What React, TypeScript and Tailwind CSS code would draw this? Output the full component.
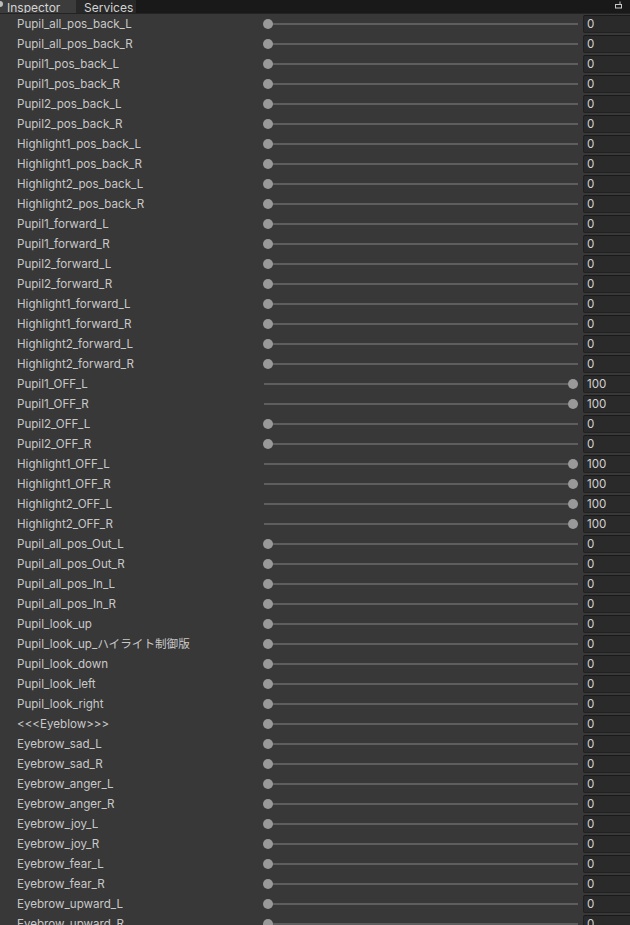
import React from 'react';

type Row = { name: string; value: number };

const names: [string, number][] = [
  ['Pupil_all_pos_back_L', 0],
  ['Pupil_all_pos_back_R', 0],
  ['Pupil1_pos_back_L', 0],
  ['Pupil1_pos_back_R', 0],
  ['Pupil2_pos_back_L', 0],
  ['Pupil2_pos_back_R', 0],
  ['Highlight1_pos_back_L', 0],
  ['Highlight1_pos_back_R', 0],
  ['Highlight2_pos_back_L', 0],
  ['Highlight2_pos_back_R', 0],
  ['Pupil1_forward_L', 0],
  ['Pupil1_forward_R', 0],
  ['Pupil2_forward_L', 0],
  ['Pupil2_forward_R', 0],
  ['Highlight1_forward_L', 0],
  ['Highlight1_forward_R', 0],
  ['Highlight2_forward_L', 0],
  ['Highlight2_forward_R', 0],
  ['Pupil1_OFF_L', 100],
  ['Pupil1_OFF_R', 100],
  ['Pupil2_OFF_L', 0],
  ['Pupil2_OFF_R', 0],
  ['Highlight1_OFF_L', 100],
  ['Highlight1_OFF_R', 100],
  ['Highlight2_OFF_L', 100],
  ['Highlight2_OFF_R', 100],
  ['Pupil_all_pos_Out_L', 0],
  ['Pupil_all_pos_Out_R', 0],
  ['Pupil_all_pos_In_L', 0],
  ['Pupil_all_pos_In_R', 0],
  ['Pupil_look_up', 0],
  ['Pupil_look_up_ハイライト制御版', 0],
  ['Pupil_look_down', 0],
  ['Pupil_look_left', 0],
  ['Pupil_look_right', 0],
  ['<<<Eyeblow>>>', 0],
  ['Eyebrow_sad_L', 0],
  ['Eyebrow_sad_R', 0],
  ['Eyebrow_anger_L', 0],
  ['Eyebrow_anger_R', 0],
  ['Eyebrow_joy_L', 0],
  ['Eyebrow_joy_R', 0],
  ['Eyebrow_fear_L', 0],
  ['Eyebrow_fear_R', 0],
  ['Eyebrow_upward_L', 0],
  ['Eyebrow_upward_R', 0],
];

const rows: Row[] = names.map(([name, value]) => ({ name, value }));

// 0..100 slider, thumb travels 5px..310px inside a 315px track box
const SliderRow: React.FC<{ row: Row }> = ({ row }) => (
  <div className="flex items-center h-[20px] pl-[17px]">
    <div className="w-[246px] shrink-0 truncate text-[11.6px] leading-[20px] text-[#c8c8c8]">{row.name}</div>
    <div className="relative w-[315px] h-[20px] shrink-0 flex items-center">
      <div className="w-full h-[2px] ml-[1px] bg-[#5e5e5e]"></div>
      <div
        className="absolute top-[5px] w-[10px] h-[10px] rounded-full bg-[#999999]"
        style={{ left: `${(row.value / 100) * 305}px` }}
      ></div>
    </div>
    <div className="ml-[5px] w-[60px] h-[18px] shrink-0 bg-[#2a2a2a] border border-[#212121] border-t-[#1a1a1a] rounded-[2px] pl-[3px] text-[11.6px] leading-[16px] text-[#d2d2d2]">
      {row.value}
    </div>
  </div>
);

const App: React.FC = () => {
  return (
    <div
      className="w-[630px] h-[925px] overflow-hidden bg-[#383838]"
      style={{ fontFamily: 'Inter, "Noto Sans CJK JP", sans-serif' }}
    >
      {/* tab bar */}
      <div className="relative flex h-[14px] bg-[#191919] border-b border-[#232323] overflow-hidden text-[12px] text-[#d4d4d4]">
        <div className="w-[76px] bg-[#3c3c3c] flex items-end leading-[12px] pl-[7px]">
          <span className="absolute left-[-3px] top-[1px] w-[6px] h-[6px] rounded-full bg-[#bdbdbd]"></span>
          <span className="-mb-[1px]">Inspector</span>
        </div>
        <div className="w-[60px] bg-[#282828] flex items-end leading-[12px] pl-[8px]">
          <span className="-mb-[1px]">Services</span>
        </div>
        <div className="flex-1"></div>
        <svg className="absolute right-[7px] top-[1px]" width="8" height="8" viewBox="0 0 8 8" fill="none">
          <path d="M5 0.5V3" stroke="#c8c8c8" strokeWidth="1" />
          <rect x="0.5" y="3.5" width="6" height="3.5" stroke="#c8c8c8" strokeWidth="1" />
        </svg>
      </div>
      <div className="flex flex-col">
        {rows.map((r, i) => (
          <SliderRow key={i} row={r} />
        ))}
      </div>
    </div>
  );
};

export default App;
